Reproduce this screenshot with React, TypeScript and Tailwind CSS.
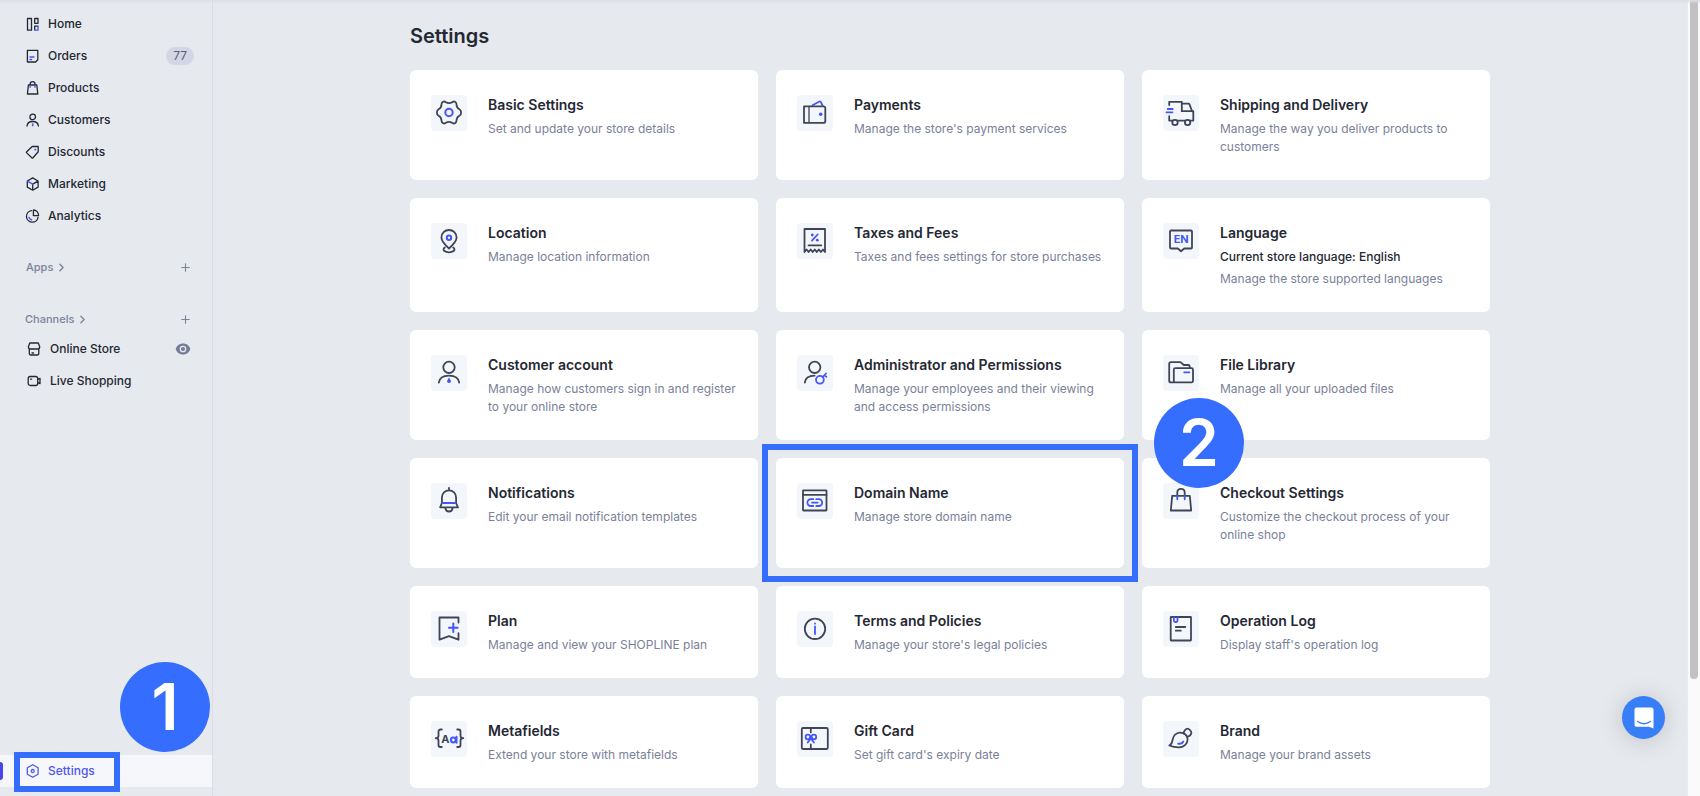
import type { ReactNode } from 'react';
import { ChevronRight, Plus } from 'lucide-react';

const BLUE = '#4256fb';

type NavItem = {
  label: string;
  icon: ReactNode;
  badge?: string;
};

type SettingCard = {
  title: string;
  desc: string;
  note?: string;
  icon: ReactNode;
  highlighted?: boolean;
  step?: string;
};

const navItems: NavItem[] = [
  {
    label: 'Home',
    icon: (
      <>
        <path d="M3.5 2.5h4v11.7h-4zM10.7 2.5h3.3v4.8h-3.3zM10.7 13.8v-3.6h3.3" />
        <path d="M14 10.5v3.7h-3" stroke={BLUE} />
      </>
    ),
  },
  {
    label: 'Orders',
    badge: '77',
    icon: (
      <>
        <path d="M3.4 2.4h10.4v9.4l-2.2 2.2H3.4z" />
        <path d="M6 9h4M6 11.5h1.6" stroke={BLUE} />
      </>
    ),
  },
  {
    label: 'Products',
    icon: (
      <>
        <path d="M4.4 5h8.4l1 9H3.4zM6.2 5V4a2.4 2.4 0 0 1 4.8 0v1" />
        <path d="M6.2 5.3v2M11 5.3v2" stroke={BLUE} />
      </>
    ),
  },
  {
    label: 'Customers',
    icon: (
      <>
        <circle cx="8.7" cy="4.9" r="2.8" />
        <path d="M3 14c.3-3 2.6-4.5 5.7-4.5s5.4 1.5 5.7 4.5" />
        <path d="M8.7 12v1.6" stroke={BLUE} strokeWidth="1.600" />
      </>
    ),
  },
  {
    label: 'Discounts',
    icon: (
      <>
        <path d="M8.2 2.500h6v5.300l-5.200 6c-.4.400-.8.400-1.200 0L2.700 8.900c-.4-.4-.4-.8 0-1.200z" />
        <path d="M11 5.400h.6v.4H11z" stroke={BLUE} />
      </>
    ),
  },
  {
    label: 'Marketing',
    icon: (
      <>
        <path d="M8.700 1.900l5.400 3.100v6.100l-5.400 3.100-5.400-3.100V5zM8.700 8.100v6M8.700 8.100l5.300-3" />
        <path d="M3.800 5.400l4.900 2.700" stroke={BLUE} />
      </>
    ),
  },
  {
    label: 'Analytics',
    icon: (
      <>
        <path d="M7.500 2.600a5.800 5.800 0 1 0 6.500 6.700M9.400 2v5.600h5.200A5.600 5.600 0 0 0 9.400 2z" />
        <path d="M5 9.400c.4 1.300 1.200 2 2.500 2.400" stroke={BLUE} strokeWidth="1.500" />
      </>
    ),
  },
];

const channelItems: NavItem[] = [
  {
    label: 'Online Store',
    icon: (
      <path d="M3.800 2h8.500l1.400 3.800c0 1.500-.8 2.200-1.900 2.200H4.300c-1.100 0-1.900-.7-1.900-2.200zM3.300 8v4.600c0 .8.500 1.400 1.300 1.400h6.900c.8 0 1.300-.6 1.300-1.400V8M6 12h1.500" />
    ),
  },
  {
    label: 'Live Shopping',
    icon: (
      <>
        <rect x="2.200" y="3.500" width="9.500" height="9" rx="2" />
        <path d="M11.700 6.300l2.300-1v5.400l-2.300-1M4.600 6.200h1" />
      </>
    ),
  },
];

const cards: SettingCard[] = [
  {
    title: 'Basic Settings',
    desc: 'Set and update your store details',
    icon: (
      <>
        <path d="M12 6.800q1.300-.7 2.500.2q3.500 2.200 7 0q1.200-.9 2.500-.2q1.600 1 1.500 2.700q.1 3.500 3.200 5q1.400.8 1.400 3t-1.400 3q-3.100 1.500-3.200 5q.1 1.700-1.500 2.700q-1.300.7-2.500-.2q-3.500-2.200-7 0q-1.200.9-2.500.2q-1.600-1-1.500-2.700q-.1-3.500-3.200-5q-1.400-.8-1.400-3t1.400-3q3.100-1.500 3.200-5q-.1-1.700 1.500-2.700z" />
        <circle cx="18" cy="17.500" r="3.700" stroke={BLUE} strokeWidth="2" />
      </>
    ),
  },
  {
    title: 'Payments',
    desc: "Manage the store's payment services",
    icon: (
      <>
        <path d="M15.500 10.300l6.500-3.600q1.400-.7 2 .6l1.700 3.500" stroke={BLUE} />
        <path d="M7 11.300h19.500a1.800 1.800 0 0 1 1.800 1.800v12.800a2 2 0 0 1-2 2H7z" />
        <path d="M12 11.500v16" strokeWidth="1.300" />
        <circle cx="23.700" cy="19.200" r="1.800" fill={BLUE} stroke="none" />
      </>
    ),
  },
  {
    title: 'Shipping and Delivery',
    desc: 'Manage the way you deliver products to customers',
    icon: (
      <>
        <path d="M6.200 10V6.800h12.600v9.400h11.500v9.400H6.200v-4.400M18.800 8.600h6.600c.6 0 .9.300 1.100.8l2.600 6.800" />
        <circle cx="12" cy="27.500" r="2.700" fill="#f3f6fb" />
        <circle cx="24.600" cy="27.500" r="2.700" fill="#f3f6fb" />
        <path d="M4.700 14h5M3.500 17.300h6" stroke={BLUE} />
      </>
    ),
  },
  {
    title: 'Location',
    desc: 'Manage location information',
    icon: (
      <>
        <path d="M18 25.500c-4-3.600-7.600-7-7.600-10.900a7.600 7.600 0 0 1 15.200 0c0 3.900-3.600 7.300-7.600 10.900z" />
        <path d="M13.800 24.500c-1.500 1-1.700 2.500-.4 3.500 2.200 1.700 7 1.700 9.200 0 1.300-1 1.100-2.500-.4-3.500" />
        <circle cx="18" cy="14.700" r="2.200" stroke={BLUE} strokeWidth="2" />
      </>
    ),
  },
  {
    title: 'Taxes and Fees',
    desc: 'Taxes and fees settings for store purchases',
    icon: (
      <>
        <path d="M7.500 29V6h20.500v23l-2-2.500-2.100 2.500-2-2.500-2.100 2.500-2-2.500-2.100 2.500-2-2.500-2.100 2.500-2-2.500zM11.500 22.300h12.800" />
        <path d="M20.600 11.500l-5.600 6.200" stroke={BLUE} strokeWidth="1.800" />
        <circle cx="15.300" cy="12" r="1.400" fill={BLUE} stroke="none" />
        <circle cx="20.300" cy="17.200" r="1.400" fill={BLUE} stroke="none" />
      </>
    ),
  },
  {
    title: 'Language',
    note: 'Current store language: English',
    desc: 'Manage the store supported languages',
    icon: (
      <>
        <path d="M7 8.500c0-.6.400-1 1-1h20c.6 0 1 .4 1 1v16c0 .6-.4 1-1 1h-6.800L18 28.300l-3.200-2.800H8c-.6 0-1-.4-1-1z" />
        <text x="18.200" y="20.300" textAnchor="middle" fontSize="11" fontWeight="700" fill={BLUE} stroke="none">
          EN
        </text>
      </>
    ),
  },
  {
    title: 'Customer account',
    desc: 'Manage how customers sign in and register to your online store',
    icon: (
      <>
        <circle cx="18" cy="12.300" r="5.700" />
        <path d="M7.800 27.700c.7-5 4.500-7 10.200-7s9.500 2 10.200 7" />
        <path d="M18 22.600l2 3.500a2 2 0 1 1-4 0z" fill={BLUE} stroke="none" />
      </>
    ),
  },
  {
    title: 'Administrator and Permissions',
    desc: 'Manage your employees and their viewing and access permissions',
    icon: (
      <>
        <circle cx="17.700" cy="12.300" r="5.700" />
        <path d="M7.800 27.700c.5-4.800 3.900-7 9.800-7" />
        <circle cx="22.900" cy="24.800" r="3.900" stroke={BLUE} strokeWidth="1.800" />
        <path d="M25.700 22l3.300-3.500M27.400 20.300l2 1.500" stroke={BLUE} strokeWidth="1.800" />
      </>
    ),
  },
  {
    title: 'File Library',
    desc: 'Manage all your uploaded files',
    icon: (
      <>
        <path d="M26.700 13v-1.500c0-1-.6-1.500-1.500-1.500h-4.400l-2.300-2.200c-.5-.5-1-.7-1.700-.7H8c-1 0-1.800.8-1.800 1.800v16.800c0 1 .8 1.700 1.800 1.700h3" />
        <rect x="10.800" y="13.200" width="19.200" height="14.200" rx="1.500" />
        <path d="M21.200 17.300h5.200" stroke={BLUE} />
      </>
    ),
  },
  {
    title: 'Notifications',
    desc: 'Edit your email notification templates',
    icon: (
      <>
        <path d="M18 4.800v2.500M10.900 20v-5.500a7.100 7.100 0 0 1 14.200 0V20l1.800 4.300H9.100zM14.300 25c.4 2.200 1.700 3.500 3.700 3.500s3.300-1.300 3.700-3.500" />
        <path d="M11.500 20h13" stroke={BLUE} />
      </>
    ),
  },
  {
    title: 'Domain Name',
    desc: 'Manage store domain name',
    highlighted: true,
    icon: (
      <>
        <rect x="6" y="7.300" width="23.500" height="20.200" rx="0.500" />
        <path d="M6 11.800h23.500" />
        <path d="M16.300 16.200h-2.500a3.400 3.400 0 0 0 0 6.800h2.500M19.300 16.200h2.500a3.400 3.400 0 0 1 0 6.800h-2.500M15 19.600h5.700" stroke={BLUE} strokeWidth="1.800" />
      </>
    ),
  },
  {
    title: 'Checkout Settings',
    desc: 'Customize the checkout process of your online shop',
    step: '2',
    icon: (
      <>
        <path d="M9.200 12.800h17.600l1.400 14.700H7.800zM14.300 12.800V9.500c0-2.200 1.500-3.700 3.700-3.700s3.700 1.500 3.700 3.700v3.300" />
        <path d="M14.300 13v3.300M21.700 13v3.300" stroke={BLUE} />
      </>
    ),
  },
  {
    title: 'Plan',
    desc: 'Manage and view your SHOPLINE plan',
    icon: (
      <>
        <path d="M27.500 11.500v-5h-19v22.200l9.500-3.600 9.500 3.600v-6.500" />
        <path d="M22.300 12.500v8.600M18 16.800h8.600" stroke={BLUE} strokeWidth="2" />
      </>
    ),
  },
  {
    title: 'Terms and Policies',
    desc: "Manage your store's legal policies",
    icon: (
      <>
        <circle cx="18" cy="17.800" r="10.200" />
        <path d="M18 15.500v7.500M18 12.500v.2" stroke={BLUE} />
      </>
    ),
  },
  {
    title: 'Operation Log',
    desc: "Display staff's operation log",
    icon: (
      <>
        <rect x="7.700" y="6" width="20.300" height="23.500" rx="0.500" />
        <path d="M12.800 16h9.500M12.800 19.700h5" />
        <path d="M10.900 6.500v3c0 1 .5 1.500 1.300 1.500h1c.8 0 1.300-.5 1.300-1.500v-3" stroke={BLUE} />
      </>
    ),
  },
  {
    title: 'Metafields',
    desc: 'Extend your store with metafields',
    icon: (
      <>
        <path d="M10.800 8.500H9.500c-1.300 0-2 .7-2 2v4.300c0 1.500-.8 2.400-2.800 2.400 2 0 2.800.9 2.800 2.400V24c0 1.300.7 2 2 2h1.300M26.200 8.500h1.300c1.300 0 2 .7 2 2v4.300c0 1.500.8 2.400 2.800 2.400-2 0-2.800.9-2.800 2.400V24c0 1.300-.7 2-2 2h-1.300" />
        <text x="10.300" y="22.300" fontSize="11" fontWeight="700" fill="#3f4557" stroke="none">
          A
        </text>
        <circle cx="22.300" cy="19" r="2.400" stroke={BLUE} strokeWidth="2" />
        <path d="M25.500 15.700v6" stroke={BLUE} strokeWidth="2" />
      </>
    ),
  },
  {
    title: 'Gift Card',
    desc: "Set gift card's expiry date",
    icon: (
      <>
        <rect x="4.800" y="7" width="26" height="21" rx="1.200" />
        <path d="M13.800 7v4.300M13.800 23.500V28" />
        <g stroke={BLUE} strokeWidth="1.800">
          <circle cx="10.900" cy="16" r="2.300" />
          <circle cx="16.900" cy="16" r="2.300" />
          <path d="M12.500 17.500h3M13.700 17.800l-3 3.700M14 17.800l3 3.700" />
        </g>
      </>
    ),
  },
  {
    title: 'Brand',
    desc: 'Manage your brand assets',
    icon: (
      <>
        <path d="M6.300 24.500c2.500-1.300 3-3.600 3.400-6 .6-3.800 3.500-6.700 7.200-6.900 4.400-.2 7.900 3 7.700 7-.3 4.200-3.400 7.500-8 7.700-3.600.1-7.300-.6-10.300-1.800z" />
        <path d="M20.700 12.500c-.2-1.800 1.600-4.600 3.700-4.800 1.500-.2 4 2.400 4 4 0 2.100-2.500 4.100-4.300 4" />
        <path d="M15.200 22.700c2.300.4 4-.3 5-2" stroke={BLUE} strokeWidth="2" />
      </>
    ),
  },
];

function NavIcon({ children }: { children: ReactNode }) {
  return (
    <svg viewBox="0 0 16 16" className="size-4 shrink-0" fill="none" stroke="currentColor" strokeWidth="1.3" strokeLinecap="round" strokeLinejoin="round" aria-hidden="true">
      {children}
    </svg>
  );
}

function StepBadge({ step }: { step: string }) {
  return (
    <span className="flex size-[90px] items-center justify-center rounded-full bg-[#356dff] text-[64px] leading-none font-semibold text-white">
      {step}
    </span>
  );
}

function Sidebar() {
  return (
    <aside className="flex w-[213px] shrink-0 flex-col border-r border-[#d8dcea] pt-2 pb-[9px] text-xs font-medium text-[#242833]">
      <nav>
        {navItems.map((item) => (
          <a key={item.label} href="#" className="flex h-8 items-center gap-2 pr-[18px] pl-6">
            <NavIcon>{item.icon}</NavIcon>
            <span>{item.label}</span>
            {item.badge && (
              <span className="ml-auto rounded-full bg-[#d4d6e6] px-[7px] leading-[18px] font-normal text-[#5b6072]">{item.badge}</span>
            )}
          </a>
        ))}
      </nav>

      <div className="mt-[25px] flex h-5 items-center justify-between pr-5 pl-[26px] text-[11px] text-[#7c839b]">
        <a href="#" className="flex items-center gap-[2px]">
          Apps <ChevronRight size={13} strokeWidth={2.5} />
        </a>
        <button aria-label="Add app">
          <Plus size={13} strokeWidth={2} />
        </button>
      </div>

      <div className="mt-8 flex h-5 items-center justify-between pr-5 pl-[25px] text-[11px] text-[#7c839b]">
        <a href="#" className="flex items-center gap-[2px]">
          Channels <ChevronRight size={13} strokeWidth={2.5} />
        </a>
        <button aria-label="Add channel">
          <Plus size={13} strokeWidth={2} />
        </button>
      </div>

      <nav className="mt-1">
        {channelItems.map((item) => (
          <div key={item.label} className="flex h-8 items-center justify-between pr-[21px] pl-[26px]">
            <a href="#" className="flex items-center gap-2">
              <NavIcon>{item.icon}</NavIcon>
              <span>{item.label}</span>
            </a>
            {item.label === 'Online Store' && (
              <button aria-label="View online store">
                <svg viewBox="0 0 16 12" className="h-3 w-4" aria-hidden="true">
                  <path d="M8 .5C4.4.5 1.700 2.700.700 6c1 3.300 3.700 5.500 7.300 5.500s6.300-2.200 7.300-5.500C14.300 2.700 11.600.500 8 .500z" fill="#747c98" />
                  <circle cx="8" cy="6" r="2.700" fill="none" stroke="#e6e9ee" strokeWidth="1.300" />
                </svg>
              </button>
            )}
          </div>
        ))}
      </nav>

      {/* Active item, pinned to the bottom */}
      <div className="relative mt-auto">
        <a href="#" className="flex h-8 items-center gap-2 bg-[#f5f7fb] pl-6 text-[#5157ea]">
          <span className="absolute left-0 h-[18px] w-[3px] rounded-r bg-[#4a45ea]" />
          <NavIcon>
            <path d="M8.700 1.700l5.400 3.100v6.400l-5.400 3.100-5.400-3.100V4.800z" />
            <circle cx="8.700" cy="8" r="1.500" />
          </NavIcon>
          Settings
        </a>
        <span className="absolute -top-[3px] left-[14px] h-10 w-[106px] border-6 border-[#356dff]" />
        <div className="absolute bottom-[35px] left-[120px]">
          <StepBadge step="1" />
        </div>
      </div>
    </aside>
  );
}

function Card({ card }: { card: SettingCard }) {
  return (
    <a href="#" className="relative flex gap-[21px] rounded-md bg-white py-6 pr-5 pl-[21px]">
      <svg viewBox="0 0 36 36" className="mt-px size-9 shrink-0 rounded bg-[#f3f6fb]" fill="none" stroke="#3f4557" strokeWidth="1.800" strokeLinecap="round" strokeLinejoin="round" aria-hidden="true">
        {card.icon}
      </svg>
      <div>
        <h2 className="text-sm leading-[22px] font-semibold text-[#242833]">{card.title}</h2>
        {card.note && <p className="mt-1 text-xs leading-[18px] font-medium text-[#242833]">{card.note}</p>}
        <p className="mt-1 text-xs leading-[18px] text-[#7a8199]">{card.desc}</p>
      </div>
      {card.highlighted && <span className="absolute -inset-[14px] z-10 border-6 border-[#356dff]" />}
      {card.step && (
        <div className="absolute -top-[60px] left-3 z-10">
          <StepBadge step={card.step} />
        </div>
      )}
    </a>
  );
}

export default function App() {
  return (
    <div className="relative flex h-screen overflow-hidden bg-[#e6e9ee] font-['Inter',sans-serif]">
      <div className="absolute inset-x-0 top-0 h-1 bg-linear-to-b from-[#dbdee4] to-transparent" />
      <Sidebar />

      <main className="flex-1 overflow-hidden">
        <div className="mx-auto max-w-[1080px] pt-[22px]">
          <h1 className="text-xl leading-7 font-semibold text-[#242833]">Settings</h1>
          <div className="mt-5 grid grid-cols-3 gap-[18px]">
            {cards.map((card) => (
              <Card key={card.title} card={card} />
            ))}
          </div>
        </div>
      </main>

      {/* Scrollbar track */}
      <div className="w-[13px] shrink-0 border-l border-[#ebebeb] bg-[#fafafa] px-[2px]">
        <div className="h-[85.3%] rounded-b-full bg-[#c1c1c1]" />
      </div>

      <button aria-label="Open chat" className="absolute right-[35px] bottom-[57px] flex size-[43px] items-center justify-center rounded-full bg-[#387ef7] shadow-[0_2px_24px_rgba(0,0,0,0.18)]">
        <svg viewBox="0 0 20 22" className="h-[22px] w-5" aria-hidden="true">
          <path d="M2.5.5h15a2 2 0 0 1 2 2v19l-4.500-1.700H2.500a2 2 0 0 1-2-2V2.500a2 2 0 0 1 2-2z" fill="#fff" />
          <path d="M3.700 14.500c3.700 2.900 8.900 2.900 12.600 0" fill="none" stroke="#387ef7" strokeWidth="1.400" strokeLinecap="round" />
        </svg>
      </button>
    </div>
  );
}
